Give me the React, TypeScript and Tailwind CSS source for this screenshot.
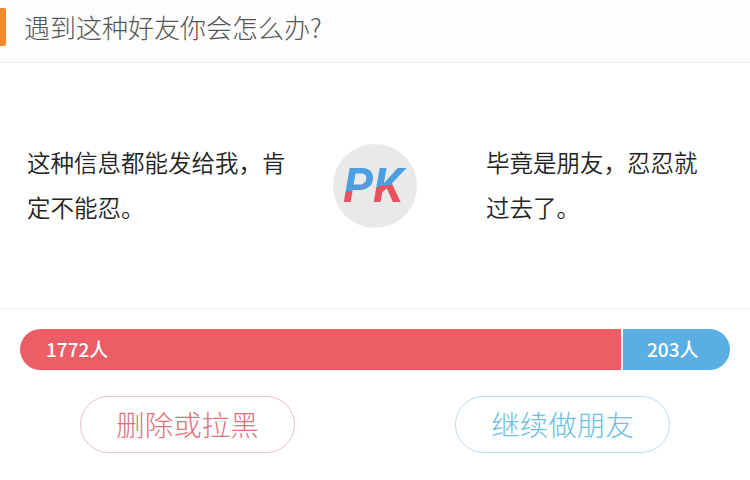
export default function App() {
  return (
    <div className="w-[750px] h-[480px] bg-white overflow-hidden font-['Noto_Sans_CJK_SC','Noto_Sans',sans-serif]">
      {/* Title */}
      <div className="h-[63px] flex items-center border-b border-[#f0f0f0] bg-[#fdfdfd]">
        <div className="w-[6px] h-[38px] bg-[#f08a2c] rounded-r-[2px] -mt-[8px]" />
        <h1 className="ml-[18px] -mt-[10px] text-[26px] font-light text-[#555]">遇到这种好友你会怎么办?</h1>
      </div>

      {/* Options */}
      <div className="h-[246px] flex items-center border-b border-[#f0f0f0] px-[27px]">
        <p className="w-[270px] text-[23.5px] leading-[45px] font-[350] text-[#222] -mt-[2px]">这种信息都能发给我，肯定不能忍。</p>
        <div className="ml-[36px] w-[84px] h-[84px] rounded-full bg-[#e9e9e9] flex items-center justify-center">
          <span className="text-[48px] leading-none font-bold italic font-['Roboto',sans-serif] bg-[linear-gradient(171deg,#4b9fe1_52%,#e8525f_52%)] bg-clip-text text-transparent pr-[4px]">
            PK
          </span>
        </div>
        <p className="ml-[69px] w-[230px] text-[23.5px] leading-[45px] font-[350] text-[#222] -mt-[2px]">毕竟是朋友，忍忍就过去了。</p>
      </div>

      {/* Result bar */}
      <div className="mt-[20px] mx-[20px] h-[41px] flex">
        <div className="w-[601px] bg-[#ec5e66] rounded-l-full flex items-center pl-[26px] text-white text-[19px] font-medium">
          1772人
        </div>
        <div className="ml-[2px] flex-1 bg-[#59afe3] rounded-r-full flex items-center pl-[24px] text-white text-[19px] font-medium">
          203人
        </div>
      </div>

      {/* Buttons */}
      <div className="mt-[26px] flex">
        <button className="ml-[80px] w-[215px] h-[57px] rounded-full border border-[#e3c3c6] text-[28.5px] font-light text-[#e0717b]">
          删除或拉黑
        </button>
        <button className="ml-[160px] w-[215px] h-[57px] rounded-full border border-[#bfdcea] text-[28.5px] font-light text-[#6bbfe2]">
          继续做朋友
        </button>
      </div>
    </div>
  );
}
